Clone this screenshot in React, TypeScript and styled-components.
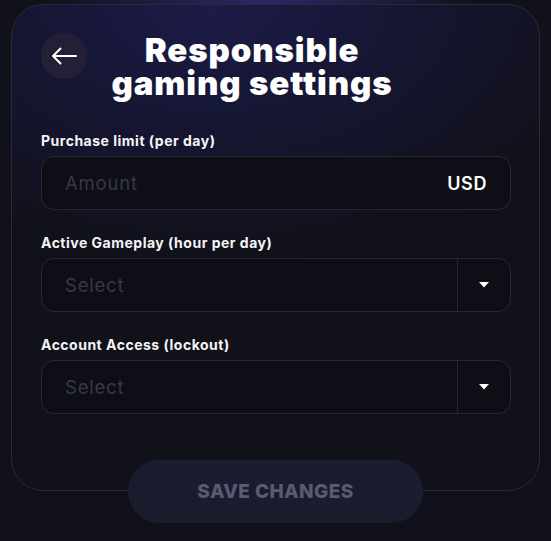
import React from 'react'
import styled, { createGlobalStyle } from 'styled-components'

const GlobalStyle = createGlobalStyle`
  html, body {
    margin: 0;
    padding: 0;
    background: #10111a;
  }

  body {
    font-family: Inter, 'Noto Sans', sans-serif;
    color: #ffffff;
  }
`

const Page = styled.div`
  width: 551px;
  height: 541px;
  box-sizing: border-box;
  padding: 4px 11px 0;
  display: flex;
  flex-direction: column;
  align-items: center;
  background:
    radial-gradient(ellipse 220px 40px at 48% 0%, #2a2966 0%, rgba(42, 41, 102, 0) 100%),
    #10111a;
  overflow: hidden;
`

const Card = styled.div`
  width: 100%;
  height: 487px;
  box-sizing: border-box;
  padding: 27px 28px 0 29px;
  border: 1px solid #2a2a37;
  border-radius: 32px;
  background:
    radial-gradient(ellipse 420px 260px at 38% 0%, #1e1c48 0%, #17173a 30%, rgba(17, 17, 26, 0) 100%),
    #111119;
`

const Header = styled.div`
  display: flex;
  align-items: flex-start;
  gap: 12px;
`

const BackButton = styled.button`
  width: 46px;
  height: 46px;
  margin-top: 1px;
  flex-shrink: 0;
  border: none;
  border-radius: 50%;
  background: #221f36;
  display: flex;
  align-items: center;
  justify-content: center;
  padding: 0;
  cursor: pointer;
`

const Title = styled.h1`
  width: 306px;
  margin: 2px 0 0;
  font-size: 33px;
  line-height: 33px;
  font-weight: 900;
  text-align: center;
  letter-spacing: 0.9px;
  color: #ffffff;
`

const Form = styled.div`
  margin-top: 33px;
  display: flex;
  flex-direction: column;
  gap: 25px;
`

const Field = styled.div`
  display: flex;
  flex-direction: column;
  gap: 7px;
`

const Label = styled.div`
  font-size: 14px;
  line-height: 16px;
  font-weight: 700;
  letter-spacing: 0.5px;
  color: #f4f4f8;
`

const InputBox = styled.div`
  height: 54px;
  box-sizing: border-box;
  display: flex;
  align-items: center;
  border: 1px solid #272733;
  border-radius: 13px;
  background: #0e0e16;
  overflow: hidden;
`

const Placeholder = styled.div`
  flex: 1;
  padding-left: 23px;
  font-size: 18.5px;
  font-weight: 400;
  letter-spacing: 0.8px;
  color: #393946;
`

const Currency = styled.div`
  padding-right: 23px;
  font-size: 18px;
  font-weight: 600;
  letter-spacing: 0.6px;
  color: #ffffff;
`

const CaretCell = styled.div`
  width: 52px;
  height: 100%;
  border-left: 1px solid #272733;
  display: flex;
  align-items: center;
  justify-content: center;
`

const SaveButton = styled.button`
  position: relative;
  margin-top: -31px;
  width: 295px;
  height: 63px;
  border: none;
  border-radius: 32px;
  background: linear-gradient(180deg, #1b1d30 0%, #1a1b2b 100%);
  font-family: Inter, 'Noto Sans', sans-serif;
  font-size: 19px;
  font-weight: 800;
  letter-spacing: 0.4px;
  color: #5b5a72;
  text-transform: uppercase;
  cursor: pointer;
`

const Caret = () => (
  <svg width="10" height="6" viewBox="0 0 10 6">
    <path d="M0 0 H10 L5 5.5 Z" fill="#ffffff" />
  </svg>
)

const ArrowLeft = () => (
  <svg width="26" height="18" viewBox="0 0 26 18" fill="none">
    <path
      d="M25 9 H2 M9.5 1.5 L2 9 L9.5 16.5"
      stroke="#ffffff"
      strokeWidth="2"
      strokeLinecap="round"
      strokeLinejoin="round"
    />
  </svg>
)

type SelectProps = {
  label: string
}

const SelectField: React.FC<SelectProps> = ({ label }) => (
  <Field>
    <Label>{label}</Label>
    <InputBox>
      <Placeholder>Select</Placeholder>
      <CaretCell>
        <Caret />
      </CaretCell>
    </InputBox>
  </Field>
)

const App: React.FC = () => {
  return (
    <>
      <GlobalStyle />
      <Page>
        <Card>
          <Header>
            <BackButton aria-label="Back">
              <ArrowLeft />
            </BackButton>
            <Title>Responsible gaming settings</Title>
          </Header>
          <Form>
            <Field>
              <Label>Purchase limit (per day)</Label>
              <InputBox>
                <Placeholder>Amount</Placeholder>
                <Currency>USD</Currency>
              </InputBox>
            </Field>
            <SelectField label="Active Gameplay (hour per day)" />
            <SelectField label="Account Access (lockout)" />
          </Form>
        </Card>
        <SaveButton>Save changes</SaveButton>
      </Page>
    </>
  )
}

export default App
